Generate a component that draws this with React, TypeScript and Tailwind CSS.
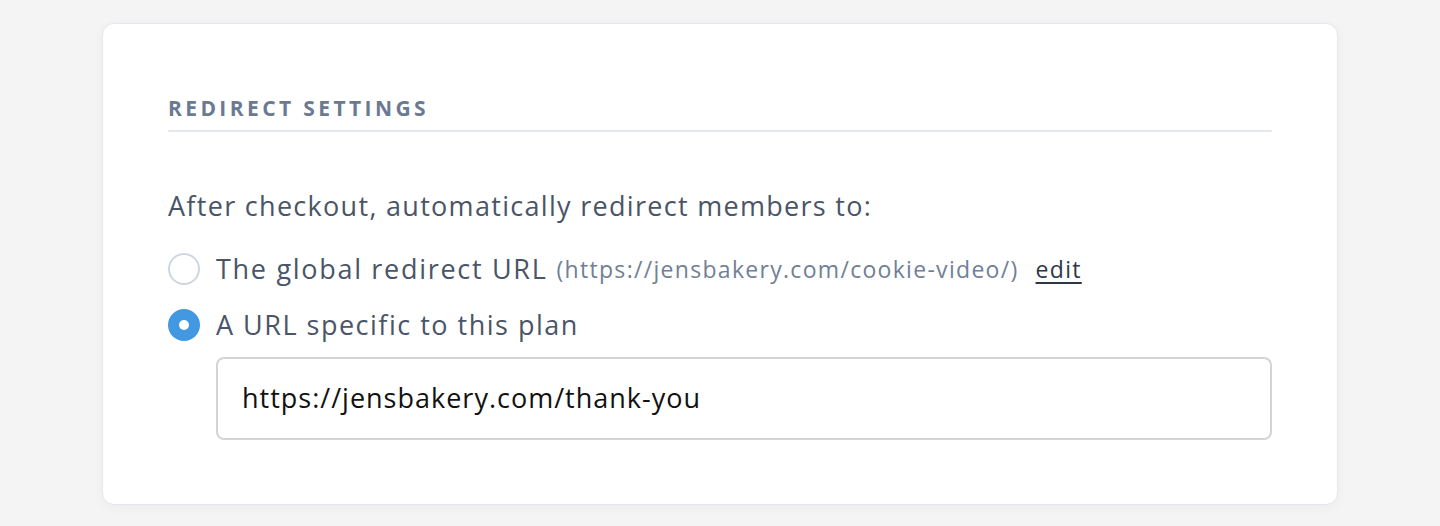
import React from "react";

export default function App() {
  return (
    <div className="min-h-[526px] w-full bg-[#f4f4f4] pt-[23px]" style={{ fontFamily: "'Open Sans', Lato, sans-serif" }}>
      <div className="mx-auto w-[1236px] rounded-[12px] border border-[#e2e7f0] bg-white px-[65px] pt-[70px] pb-[64px] shadow-[0_2px_12px_rgba(0,0,0,0.04)]">
        <div className="border-b-2 border-[#e3e7f0] pb-[8px]">
          <h2 className="text-[21px] font-bold uppercase leading-[28px] tracking-[3.4px] text-[#6b7a93]">Redirect Settings</h2>
        </div>
        <p className="mt-[56px] text-[27px] leading-[36px] tracking-[1.3px] text-[#4a5568]">After checkout, automatically redirect members to:</p>
        <div className="mt-[25px] flex h-[40px] items-center">
          <span className="h-[32px] w-[32px] shrink-0 rounded-full border-2 border-[#cfd6e0] bg-white" />
          <span className="ml-[16px] text-[27px] leading-[36px] tracking-[1.7px] text-[#4a5568]">The global redirect URL</span>
          <span className="ml-[9px] text-[23px] leading-[36px] tracking-[1.3px] text-[#718096]">(https://jensbakery.com/cookie-video/)</span>
          <a className="ml-[17px] text-[23px] leading-[36px] tracking-[1.3px] text-[#2d3748] underline underline-offset-[4px]">edit</a>
        </div>
        <div className="mt-[16px] flex h-[40px] items-center">
          <span className="flex h-[32px] w-[32px] shrink-0 items-center justify-center rounded-full bg-[#4299e1]">
            <span className="h-[10px] w-[10px] rounded-full bg-white" />
          </span>
          <span className="ml-[16px] text-[27px] leading-[36px] tracking-[1.5px] text-[#4a5568]">A URL specific to this plan</span>
        </div>
        <div className="mt-[12px] pl-[48px]">
          <div className="flex h-[83px] items-center rounded-[8px] border-2 border-[#d4d4d4] px-[24px] text-[27px] tracking-[1px] text-[#111111]">
            https://jensbakery.com/thank-you
          </div>
        </div>
      </div>
    </div>
  );
}
